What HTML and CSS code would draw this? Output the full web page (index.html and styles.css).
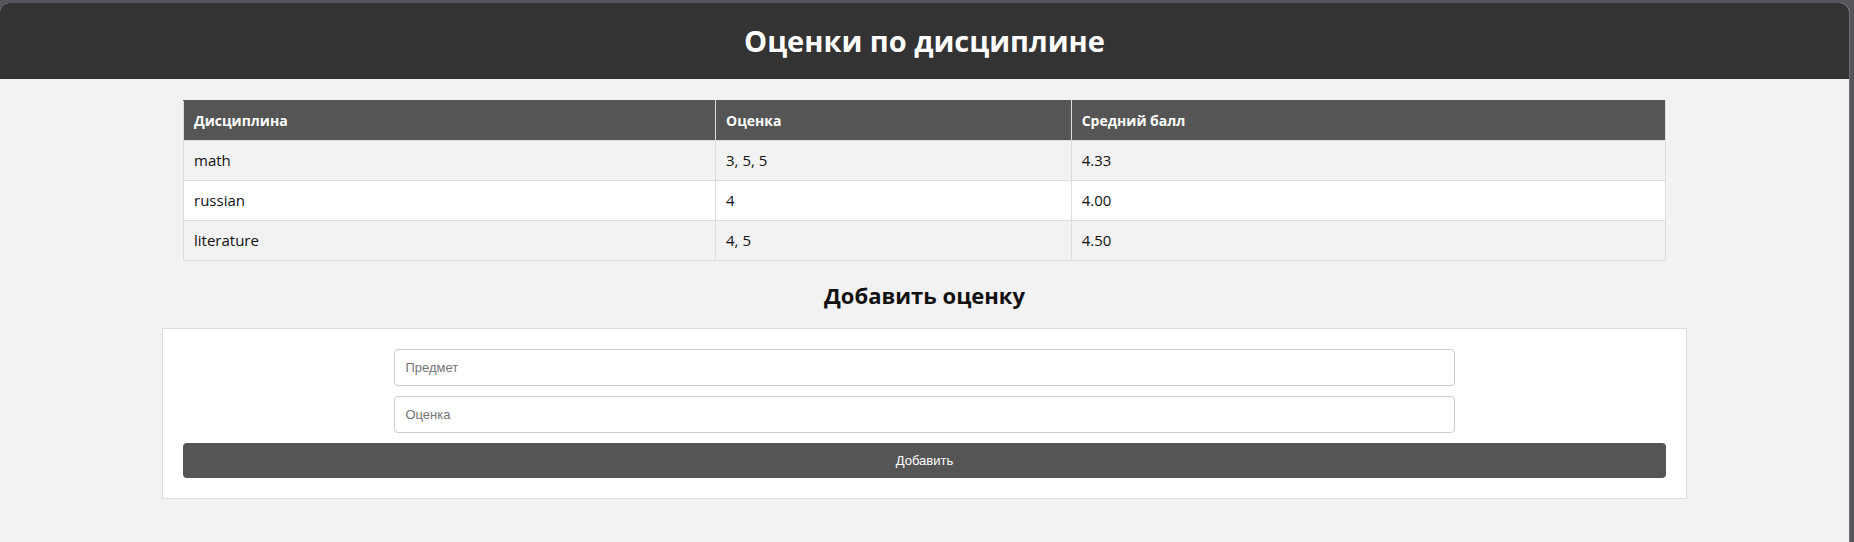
FILE: index.html
```html
<!DOCTYPE html>
<html lang="ru">
<head>
<meta charset="utf-8">
<title>Оценки по дисциплине</title>
<link rel="stylesheet" href="styles.css">
</head>
<body>
<div class="page">
  <header class="topbar">
    <h1 class="title">Оценки по дисциплине</h1>
  </header>
  <main class="content">
    <table class="grades">
      <thead>
        <tr><th>Дисциплина</th><th>Оценка</th><th>Средний балл</th></tr>
      </thead>
      <tbody>
        <tr><td>math</td><td>3, 5, 5</td><td>4.33</td></tr>
        <tr><td>russian</td><td>4</td><td>4.00</td></tr>
        <tr><td>literature</td><td>4, 5</td><td>4.50</td></tr>
      </tbody>
    </table>
    <h2 class="section-title">Добавить оценку</h2>
    <form class="form-box">
      <input class="field" type="text" placeholder="Предмет">
      <input class="field" type="text" placeholder="Оценка">
      <button class="submit" type="button">Добавить</button>
    </form>
  </main>
</div>
</body>
</html>
```
FILE: styles.css
```css
html {
  background: #55565c;
  height: 100%;
}
body {
  margin: 3px 5px 0 0;
  min-height: calc(100vh - 3px);
  box-shadow: 1px 0 0 #6d6e72;
  border-radius: 9px 9px 0 0;
  background: #f2f2f2;
  overflow: hidden;
  font-family: "Open Sans", "DejaVu Sans", sans-serif;
  color: #111;
}
.page {
  display: flex;
  flex-direction: column;
}
.topbar {
  background: #333333;
  color: #ffffff;
  text-align: center;
  padding: 20px;
}
.title {
  margin: 0;
  font-size: 29px;
  line-height: 36px;
  font-weight: 700;
}
.content {
  box-sizing: border-box;
  width: 1525px;
  margin: 0 auto;
  padding: 21px 0 0;
}
.grades {
  width: calc(100% - 42px);
  margin: 0 21px;
  border-collapse: collapse;
  font-size: 15px;
  line-height: 19px;
}
.grades th,
.grades td {
  border: 1px solid #dddddd;
  padding: 10px;
  text-align: left;
}
.grades th {
  background: #555555;
  color: #ffffff;
  font-weight: 700;
  font-size: 14px;
  border-color: #555555 #dddddd #dddddd #dddddd;
}
.grades th:nth-child(1) { width: 35.9%; }
.grades th:nth-child(2) { width: 24%; }
.grades tbody tr:nth-child(odd) td { background: #f2f2f2; }
.grades tbody tr:nth-child(even) td { background: #ffffff; }
.section-title {
  margin: 20px 0 18px;
  text-align: center;
  font-size: 22px;
  line-height: 29px;
  font-weight: 700;
  color: #111;
}
.form-box {
  margin: 0;
  background: #ffffff;
  border: 1px solid #dddddd;
  padding: 20px;
  display: flex;
  flex-direction: column;
  align-items: center;
  gap: 10px;
}
.field {
  width: 70%;
  padding: 10px;
  border: 1px solid #cccccc;
  border-radius: 4px;
  font-family: "Liberation Sans", Arial, sans-serif;
  font-size: 13px;
  line-height: 15px;
  color: #222;
  background: #ffffff;
  outline: none;
}
.field::placeholder {
  color: #757575;
}
.submit {
  align-self: stretch;
  padding: 10px;
  border: none;
  border-radius: 4px;
  background: #555555;
  color: #ffffff;
  font-family: "Liberation Sans", Arial, sans-serif;
  font-size: 13px;
  line-height: 15px;
  cursor: pointer;
}
```
